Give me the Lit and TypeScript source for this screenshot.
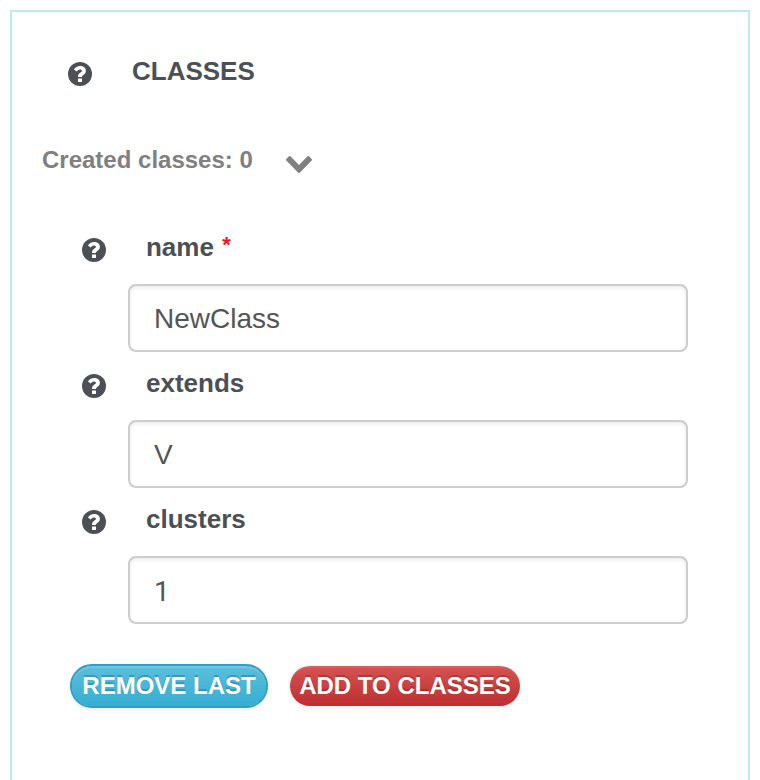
import { LitElement, html, css, nothing } from "lit";
import { customElement, property } from "lit/decorators.js";

const helpIcon = html`
  <svg class="help" viewBox="0 0 24 24">
    <circle cx="12" cy="12" r="12" fill="currentColor" />
    <path
      fill="#fff"
      d="M5.9 7.6C7.3 5.2 9.4 4 12.1 4C15.4 4 17.9 6 17.9 8.8C17.9 10.9 16.8 12 15.3 12.9C14.3 13.5 14 13.9 14 15H10C10 12.6 10.8 11.5 12.5 10.5C13.5 9.9 13.9 9.5 13.9 8.8C13.9 8 13.1 7.4 12.1 7.4C10.7 7.4 9.7 8.2 8.7 9.6ZM10 16.4H14V20H10Z"
    />
  </svg>
`;

const helpStyles = css`
  .help {
    display: block;
    flex: none;
    width: 24px;
    height: 24px;
    margin-top: 6px;
    overflow: visible;
    color: #4c4f56;
  }
`;

@customElement("form-field")
class FormField extends LitElement {
  @property() label = "";
  @property() value = "";
  @property({ type: Boolean }) required = false;
  @property({ type: Boolean, reflect: true }) numeric = false;

  static styles = [
    helpStyles,
    css`
      :host {
        display: block;
        height: 136px;
      }
      .caption {
        display: flex;
        gap: 40.3px;
        height: 52px;
        padding-left: 69.7px;
        font-weight: bold;
        font-size: 26px;
        line-height: 30px;
        color: #4c4f56;
      }
      .star {
        margin-left: 1px;
        font-size: 22px;
        line-height: 0;
        vertical-align: 4px;
        color: #fb0f1e;
      }
      input {
        display: block;
        box-sizing: border-box;
        width: 560px;
        height: 68px;
        margin: 0 0 0 116px;
        padding: 2px 24px 0;
        border: 2px solid #ccc;
        border-radius: 8px;
        background: #fff;
        box-shadow: inset 0 2px 4px rgba(0, 0, 0, 0.08);
        font: 28px "Liberation Sans", Arial, sans-serif;
        color: #555;
        outline: none;
      }
      :host([numeric]) input {
        font-family: Roboto, "Liberation Sans", sans-serif;
      }
    `,
  ];

  render() {
    return html`
      <div class="caption">
        ${helpIcon}
        <label>${this.label}${this.required ? html` <span class="star">*</span>` : nothing}</label>
      </div>
      <input type="text" .value=${this.value} />
    `;
  }
}

@customElement("app-root")
class AppRoot extends LitElement {
  static styles = [
    helpStyles,
    css`
      :host {
        display: block;
        box-sizing: border-box;
        height: 780px;
        padding: 10px 10px 0;
        overflow: hidden;
        background: #fff;
        font-family: "Liberation Sans", Arial, sans-serif;
      }
      .panel {
        box-sizing: border-box;
        height: 790px;
        padding-top: 44px;
        border: 2px solid #bfe8f0;
      }
      .title {
        display: flex;
        gap: 40.3px;
        height: 89px;
        padding-left: 55.7px;
      }
      h1 {
        margin: 0;
        font-size: 26px;
        line-height: 30px;
        color: #4c4f56;
      }
      .created {
        display: flex;
        gap: 33px;
        height: 87px;
        padding-left: 30px;
        font-size: 24px;
        font-weight: bold;
        line-height: 30px;
        color: #808080;
      }
      .chevron {
        width: 26px;
        height: 17px;
        margin-top: 11px;
      }
      .actions {
        display: flex;
        align-items: center;
        gap: 22px;
        height: 44px;
        margin-top: 24px;
        padding-left: 58px;
      }
      button {
        box-sizing: border-box;
        padding: 0;
        border: 0;
        border-radius: 22px;
        font: bold 24px "Liberation Sans", Arial, sans-serif;
        color: #fff;
        white-space: nowrap;
      }
      .remove {
        width: 198px;
        height: 44px;
        border: 2px solid #2e9fc3;
        background: #2e9fc3 linear-gradient(#5bbedc, #35aed2) padding-box;
        box-shadow: inset 0 2px 0 rgba(255, 255, 255, 0.15), 0 2px 4px rgba(0, 0, 0, 0.08);
        text-shadow: 0 -2px 0 rgba(0, 0, 0, 0.2);
      }
      .add {
        width: 230px;
        height: 40px;
        background: linear-gradient(#d65352, #bd2e30);
        box-shadow: inset 0 2px 0 rgba(255, 255, 255, 0.06), 0 2px 4px rgba(0, 0, 0, 0.08);
        text-shadow: 0 -2px 0 rgba(0, 0, 0, 0.2);
      }
    `,
  ];

  render() {
    return html`
      <section class="panel">
        <div class="title">${helpIcon}<h1>CLASSES</h1></div>
        <div class="created">
          <span>Created classes: 0</span>
          <svg class="chevron" viewBox="90 533 1612 1035" preserveAspectRatio="none">
            <path fill="currentColor" d="M1683 808l-742 741q-19 19-45 19t-45-19l-742-741q-19-19-19-45.5t19-45.5l166-165q19-19 45-19t45 19l531 531 531-531q19-19 45-19t45 19l166 165q19 19 19 45.5t-19 45.5z"/>
          </svg>
        </div>
        <form-field label="name" value="NewClass" required></form-field>
        <form-field label="extends" value="V"></form-field>
        <form-field label="clusters" value="1" numeric></form-field>
        <div class="actions">
          <button class="remove" type="button">REMOVE LAST</button>
          <button class="add" type="button">ADD TO CLASSES</button>
        </div>
      </section>
    `;
  }
}
